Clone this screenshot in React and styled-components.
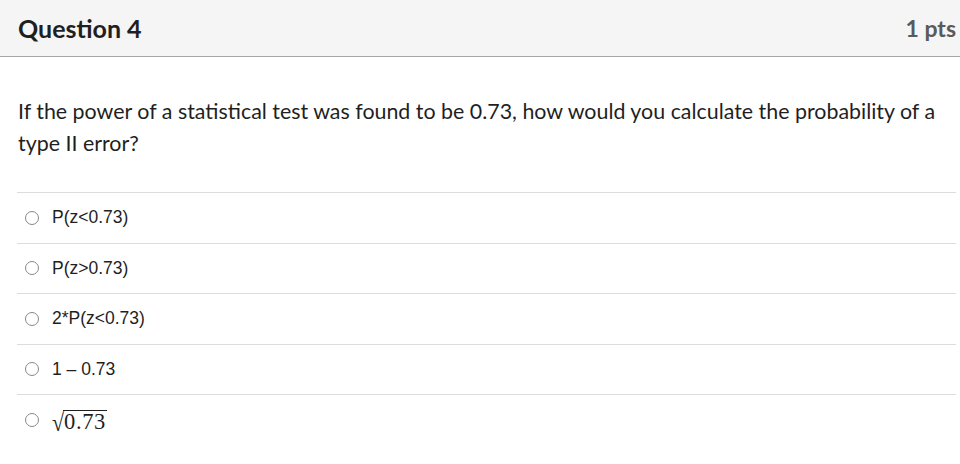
import React from 'react'
import styled, { createGlobalStyle } from 'styled-components'

const Global = createGlobalStyle`
  html, body { margin: 0; padding: 0; background: #fff; }
  body { width: 960px; height: 464px; overflow: hidden; }
`

const Page = styled.div`
  width: 960px;
  font-family: Lato, "Open Sans", sans-serif;
  color: #2d3b45;
`

const Header = styled.div`
  height: 56px;
  background: #f5f5f5;
  border-bottom: 1px solid #a5a5a5;
  display: flex;
  align-items: center;
  justify-content: space-between;
  padding: 0 4px 0 18px;
`

const Title = styled.div`
  font-size: 25px;
  font-weight: 700;
  color: #1f1f1f;
  margin-top: -1px;
`

const Points = styled.div`
  font-size: 23px;
  font-weight: 700;
  color: #5a5a5a;
  margin-top: -1px;
`

const Body = styled.div`
  padding: 38px 4px 0 17px;
`

const Question = styled.div`
  font-size: 21.4px;
  line-height: 32px;
  color: #1f1f1f;
  padding-left: 1px;
  margin-bottom: 33px;
`

const Answers = styled.div`
  display: flex;
  flex-direction: column;
`

const Answer = styled.label`
  display: flex;
  align-items: center;
  height: 49.5px;
  border-top: 1px solid #dcdcdc;
  font-family: "Liberation Sans", Arial, sans-serif;
  font-size: 17.5px;
  color: #1f1f1f;
`

const Radio = styled.span`
  width: 12px;
  height: 12px;
  border: 1px solid #888;
  border-radius: 50%;
  margin: 0 13px 0 8px;
  flex-shrink: 0;
`

const Sqrt = styled.span`
  font-family: "Liberation Serif", "Times New Roman", serif;
  display: inline-flex;
  align-items: flex-start;
  margin-top: 4px;
`

const Root = styled.span`
  font-size: 22px;
  line-height: 22px;
  display: inline-block;
  transform: scaleY(1.12);
  transform-origin: top;
  margin-top: 1px;
  margin-right: -1px;
`

const Radicand = styled.span`
  border-top: 1.3px solid #1f1f1f;
  font-size: 22.5px;
  letter-spacing: 0.6px;
  padding: 0 1px 0 1px;
  line-height: 21px;
`

const answers = ['P(z<0.73)', 'P(z>0.73)', '2*P(z<0.73)', '1 – 0.73']

export default function App() {
  return (
    <Page>
      <Global />
      <Header>
        <Title>Question 4</Title>
        <Points>1 pts</Points>
      </Header>
      <Body>
        <Question>
          If the power of a statistical test was found to be 0.73, how would you calculate the probability of a type II error?
        </Question>
        <Answers>
          {answers.map((a) => (
            <Answer key={a}>
              <Radio />
              {a}
            </Answer>
          ))}
          <Answer>
            <Radio />
            <Sqrt>
              <Root>√</Root>
              <Radicand>0.73</Radicand>
            </Sqrt>
          </Answer>
        </Answers>
      </Body>
    </Page>
  )
}
